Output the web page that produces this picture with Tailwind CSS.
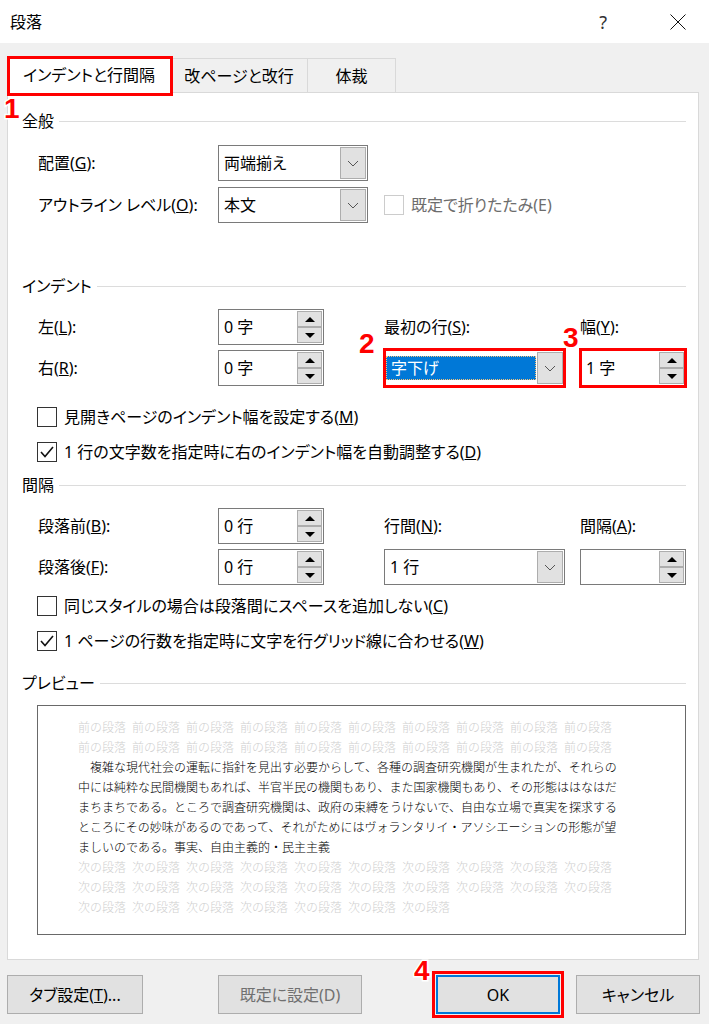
<!DOCTYPE html>
<html lang="ja">
<head>
  <meta charset="UTF-8" />
  <title>段落</title>
  <script src="https://cdn.jsdelivr.net/npm/@tailwindcss/browser@4"></script>
</head>
<body class="bg-[#f0f0f0]">
  <div class="relative w-[709px] h-[1024px] overflow-hidden bg-[#f0f0f0] text-black text-[16px] leading-[24px] font-['Noto_Sans','Noto_Sans_CJK_JP',sans-serif] [font-feature-settings:'palt']">

    <!-- Title bar -->
    <div class="flex items-center justify-between h-[43px] bg-white pl-[10px] pr-[23px]">
      <span>段落</span>
      <div class="flex items-center gap-[63px]">
        <span class="text-[18px] text-[#333]">?</span>
        <svg class="w-[16px] h-[16px]" viewBox="0 0 16 16" fill="none" stroke="#111" stroke-width="1"><path d="M.5.5l15 15M15.5.5l-15 15" /></svg>
      </div>
    </div>

    <!-- Tabs -->
    <div class="relative z-10 flex items-end h-[49px] pl-[7px]">
      <div class="relative flex items-center justify-center w-[164px] h-[37px] -mb-px bg-white border-t border-l border-r border-[#d9d9d9]">
        インデントと行間隔
        <div class="absolute -left-[1px] -top-[1px] w-[166px] h-[40px] border-[3px] border-[#ff0000]"></div>
      </div>
      <div class="flex items-center justify-center w-[137px] h-[34px] border-t border-r border-[#d9d9d9]">改ページと改行</div>
      <div class="flex items-center justify-center w-[88px] h-[34px] border-t border-r border-[#d9d9d9]">体裁</div>
    </div>

    <!-- Panel -->
    <div class="ml-[7px] w-[692px] h-[868px] bg-white border border-[#d9d9d9] pl-[14px] pr-[12px]">

      <div class="flex items-center gap-[5px] h-[24px] mt-[16px]"><span>全般</span><div class="flex-1 h-px bg-[#dcdcdc]"></div></div>

      <div class="flex items-center h-[36px] mt-[12px] ml-[16px]">
        <span class="w-[180px]">配置(<u>G</u>):</span>
        <div class="flex items-center justify-between w-[150px] h-[36px] border border-[#7a7a7a] pl-[5px] pr-px">
          <span>両端揃え</span>
          <div class="flex items-center justify-center w-[26px] h-[32px] bg-[#e1e1e1] border border-[#adadad]">
            <svg class="w-[12px] h-[7px]" viewBox="0 0 12 7" fill="none" stroke="#555"><path d="M1 1l5 5 5-5" /></svg>
          </div>
        </div>
      </div>

      <div class="flex items-center h-[36px] mt-[6px] ml-[16px]">
        <span class="w-[180px]">アウトライン レベル(<u>O</u>):</span>
        <div class="flex items-center justify-between w-[150px] h-[36px] border border-[#7a7a7a] pl-[5px] pr-px">
          <span>本文</span>
          <div class="flex items-center justify-center w-[26px] h-[32px] bg-[#e1e1e1] border border-[#adadad]">
            <svg class="w-[12px] h-[7px]" viewBox="0 0 12 7" fill="none" stroke="#555"><path d="M1 1l5 5 5-5" /></svg>
          </div>
        </div>
        <div class="w-[20px] h-[20px] ml-[16px] border border-[#cccccc]"></div>
        <span class="ml-[7px] text-[#6d6d6d]">既定で折りたたみ(E)</span>
      </div>

      <div class="flex items-center gap-[5px] h-[24px] mt-[51px]"><span>インデント</span><div class="flex-1 h-px bg-[#dcdcdc]"></div></div>

      <div class="grid grid-cols-[180px_106px_60px_196px_106px] grid-rows-[36px_36px] gap-y-[5px] mt-[11px] ml-[16px] items-center">
        <span>左(<u>L</u>):</span>
        <div class="flex items-center justify-between h-[36px] border border-[#7a7a7a] pl-[5px] pr-px">
          <span>0 字</span>
          <div class="flex flex-col w-[25px]">
            <div class="flex items-center justify-center h-[16px] bg-[#e1e1e1] border border-[#adadad]"><svg class="w-[10px] h-[5px]" viewBox="0 0 10 5"><path d="M0 5h10L5 0z" /></svg></div>
            <div class="flex items-center justify-center h-[16px] bg-[#e1e1e1] border border-[#adadad]"><svg class="w-[10px] h-[5px]" viewBox="0 0 10 5"><path d="M0 0h10L5 5z" /></svg></div>
          </div>
        </div>
        <span></span>
        <span>最初の行(<u>S</u>):</span>
        <span>幅(<u>Y</u>):</span>

        <span>右(<u>R</u>):</span>
        <div class="flex items-center justify-between h-[36px] border border-[#7a7a7a] pl-[5px] pr-px">
          <span>0 字</span>
          <div class="flex flex-col w-[25px]">
            <div class="flex items-center justify-center h-[16px] bg-[#e1e1e1] border border-[#adadad]"><svg class="w-[10px] h-[5px]" viewBox="0 0 10 5"><path d="M0 5h10L5 0z" /></svg></div>
            <div class="flex items-center justify-center h-[16px] bg-[#e1e1e1] border border-[#adadad]"><svg class="w-[10px] h-[5px]" viewBox="0 0 10 5"><path d="M0 0h10L5 5z" /></svg></div>
          </div>
        </div>
        <span></span>
        <div class="relative flex items-center justify-between w-[181px] h-[36px] border border-[#7a7a7a] pl-[1px] pr-px">
          <span class="flex-1 h-[24px] flex items-center mr-px pl-[4px] bg-[#0078d7] text-white border border-dotted border-[#f5c27a]">字下げ</span>
          <div class="flex items-center justify-center w-[26px] h-[32px] bg-[#e1e1e1] border border-[#adadad]">
            <svg class="w-[12px] h-[7px]" viewBox="0 0 12 7" fill="none" stroke="#555"><path d="M1 1l5 5 5-5" /></svg>
          </div>
          <div class="absolute -left-[2px] -top-[3px] w-[183px] h-[40px] border-[3px] border-[#ff0000]"></div>
        </div>
        <div class="relative flex items-center justify-between h-[36px] border border-[#7a7a7a] pl-[5px] pr-px">
          <span>1 字</span>
          <div class="flex flex-col w-[25px]">
            <div class="flex items-center justify-center h-[16px] bg-[#e1e1e1] border border-[#adadad]"><svg class="w-[10px] h-[5px]" viewBox="0 0 10 5"><path d="M0 5h10L5 0z" /></svg></div>
            <div class="flex items-center justify-center h-[16px] bg-[#e1e1e1] border border-[#adadad]"><svg class="w-[10px] h-[5px]" viewBox="0 0 10 5"><path d="M0 0h10L5 5z" /></svg></div>
          </div>
          <div class="absolute -left-[2px] -top-[3px] w-[108px] h-[40px] border-[3px] border-[#ff0000]"></div>
        </div>
      </div>

      <div class="flex items-center h-[20px] mt-[21px] ml-[15px]">
        <div class="w-[20px] h-[20px] border border-[#333] bg-white"></div>
        <span class="ml-[7px]">見開きページのインデント幅を設定する(<u>M</u>)</span>
      </div>
      <div class="flex items-center h-[20px] mt-[15px] ml-[15px]">
        <div class="flex items-center justify-center w-[20px] h-[20px] border border-[#333] bg-white">
          <svg class="w-[14px] h-[12px]" viewBox="0 0 14 12" fill="none" stroke="#111" stroke-width="1.6"><path d="M1 6l4 4.5L13 1" /></svg>
        </div>
        <span class="ml-[7px]">1 行の文字数を指定時に右のインデント幅を自動調整する(<u>D</u>)</span>
      </div>

      <div class="flex items-center gap-[5px] h-[24px] mt-[11px]"><span>間隔</span><div class="flex-1 h-px bg-[#dcdcdc]"></div></div>

      <div class="grid grid-cols-[180px_106px_60px_196px_106px] grid-rows-[36px_36px] gap-y-[5px] mt-[11px] ml-[16px] items-center">
        <span>段落前(<u>B</u>):</span>
        <div class="flex items-center justify-between h-[36px] border border-[#7a7a7a] pl-[5px] pr-px">
          <span>0 行</span>
          <div class="flex flex-col w-[25px]">
            <div class="flex items-center justify-center h-[16px] bg-[#e1e1e1] border border-[#adadad]"><svg class="w-[10px] h-[5px]" viewBox="0 0 10 5"><path d="M0 5h10L5 0z" /></svg></div>
            <div class="flex items-center justify-center h-[16px] bg-[#e1e1e1] border border-[#adadad]"><svg class="w-[10px] h-[5px]" viewBox="0 0 10 5"><path d="M0 0h10L5 5z" /></svg></div>
          </div>
        </div>
        <span></span>
        <span>行間(<u>N</u>):</span>
        <span>間隔(<u>A</u>):</span>

        <span>段落後(<u>F</u>):</span>
        <div class="flex items-center justify-between h-[36px] border border-[#7a7a7a] pl-[5px] pr-px">
          <span>0 行</span>
          <div class="flex flex-col w-[25px]">
            <div class="flex items-center justify-center h-[16px] bg-[#e1e1e1] border border-[#adadad]"><svg class="w-[10px] h-[5px]" viewBox="0 0 10 5"><path d="M0 5h10L5 0z" /></svg></div>
            <div class="flex items-center justify-center h-[16px] bg-[#e1e1e1] border border-[#adadad]"><svg class="w-[10px] h-[5px]" viewBox="0 0 10 5"><path d="M0 0h10L5 5z" /></svg></div>
          </div>
        </div>
        <span></span>
        <div class="flex items-center justify-between w-[181px] h-[36px] border border-[#7a7a7a] pl-[5px] pr-px">
          <span>1 行</span>
          <div class="flex items-center justify-center w-[26px] h-[32px] bg-[#e1e1e1] border border-[#adadad]">
            <svg class="w-[12px] h-[7px]" viewBox="0 0 12 7" fill="none" stroke="#555"><path d="M1 1l5 5 5-5" /></svg>
          </div>
        </div>
        <div class="flex items-center justify-end h-[36px] border border-[#7a7a7a] pl-[5px] pr-px">
          <div class="flex flex-col w-[25px]">
            <div class="flex items-center justify-center h-[16px] bg-[#e1e1e1] border border-[#adadad]"><svg class="w-[10px] h-[5px]" viewBox="0 0 10 5"><path d="M0 5h10L5 0z" /></svg></div>
            <div class="flex items-center justify-center h-[16px] bg-[#e1e1e1] border border-[#adadad]"><svg class="w-[10px] h-[5px]" viewBox="0 0 10 5"><path d="M0 0h10L5 5z" /></svg></div>
          </div>
        </div>
      </div>

      <div class="flex items-center h-[20px] mt-[11px] ml-[15px]">
        <div class="w-[20px] h-[20px] border border-[#333] bg-white"></div>
        <span class="ml-[7px]">同じスタイルの場合は段落間にスペースを追加しない(<u>C</u>)</span>
      </div>
      <div class="flex items-center h-[20px] mt-[15px] ml-[15px]">
        <div class="flex items-center justify-center w-[20px] h-[20px] border border-[#333] bg-white">
          <svg class="w-[14px] h-[12px]" viewBox="0 0 14 12" fill="none" stroke="#111" stroke-width="1.6"><path d="M1 6l4 4.5L13 1" /></svg>
        </div>
        <span class="ml-[7px]">1 ページの行数を指定時に文字を行グリッド線に合わせる(<u>W</u>)</span>
      </div>

      <div class="flex items-center gap-[5px] h-[24px] mt-[20px]"><span>プレビュー</span><div class="flex-1 h-px bg-[#dcdcdc]"></div></div>

      <!-- Preview box -->
      <div class="w-[649px] h-[230px] mt-[10px] ml-[15px] border border-[#696969] pt-[12px] pl-[40px] text-[12px] leading-[20px] font-light whitespace-nowrap [font-feature-settings:normal]">
        <div class="text-[#cfcfcf]">前の段落&ensp;前の段落&ensp;前の段落&ensp;前の段落&ensp;前の段落&ensp;前の段落&ensp;前の段落&ensp;前の段落&ensp;前の段落&ensp;前の段落</div>
        <div class="text-[#cfcfcf]">前の段落&ensp;前の段落&ensp;前の段落&ensp;前の段落&ensp;前の段落&ensp;前の段落&ensp;前の段落&ensp;前の段落&ensp;前の段落&ensp;前の段落</div>
        <div class="pl-[12px]">複雑な現代社会の運転に指針を見出す必要からして、各種の調査研究機関が生まれたが、それらの</div>
        <div>中には純粋な民間機関もあれば、半官半民の機関もあり、また国家機関もあり、その形態ははなはだ</div>
        <div>まちまちである。ところで調査研究機関は、政府の束縛をうけないで、自由な立場で真実を探求する</div>
        <div>ところにその妙味があるのであって、それがためにはヴォランタリイ・アソシエーションの形態が望</div>
        <div>ましいのである。事実、自由主義的・民主主義</div>
        <div class="text-[#cfcfcf]">次の段落&ensp;次の段落&ensp;次の段落&ensp;次の段落&ensp;次の段落&ensp;次の段落&ensp;次の段落&ensp;次の段落&ensp;次の段落&ensp;次の段落</div>
        <div class="text-[#cfcfcf]">次の段落&ensp;次の段落&ensp;次の段落&ensp;次の段落&ensp;次の段落&ensp;次の段落&ensp;次の段落&ensp;次の段落&ensp;次の段落&ensp;次の段落</div>
        <div class="text-[#cfcfcf]">次の段落&ensp;次の段落&ensp;次の段落&ensp;次の段落&ensp;次の段落&ensp;次の段落&ensp;次の段落</div>
      </div>
    </div>

    <!-- Footer buttons -->
    <div class="flex items-center h-[39px] mt-[15px] ml-[7px]">
      <div class="flex items-center justify-center w-[136px] h-[39px] bg-[#e1e1e1] border border-[#adadad]"><span>タブ設定(<u>T</u>)...</span></div>
      <div class="flex items-center justify-center w-[144px] h-[39px] ml-[75px] bg-[#e1e1e1] border border-[#adadad] text-[#707070]">既定に設定(D)</div>
      <div class="relative flex items-center justify-center w-[124px] h-[39px] ml-[74px] bg-[#e1e1e1] border-2 border-[#0078d7]">
        OK
        <div class="absolute -left-[6px] -top-[6px] w-[132px] h-[47px] border-[3px] border-[#ff0000]"></div>
      </div>
      <div class="flex items-center justify-center w-[124px] h-[39px] ml-[16px] bg-[#e1e1e1] border border-[#adadad]">キャンセル</div>
    </div>

    <!-- Step numbers -->
    <span class="absolute left-[4px] top-[95px] text-[28px] leading-[28px] font-bold text-[#ff0000] font-['Liberation_Sans',sans-serif] [-webkit-text-stroke:3px_white] [paint-order:stroke]">1</span>
    <span class="absolute left-[359px] top-[330px] text-[28px] leading-[28px] font-bold text-[#ff0000] font-['Liberation_Sans',sans-serif] [-webkit-text-stroke:3px_white] [paint-order:stroke]">2</span>
    <span class="absolute left-[563px] top-[324px] text-[28px] leading-[28px] font-bold text-[#ff0000] font-['Liberation_Sans',sans-serif] [-webkit-text-stroke:3px_white] [paint-order:stroke]">3</span>
    <span class="absolute left-[414px] top-[957px] text-[28px] leading-[28px] font-bold text-[#ff0000] font-['Liberation_Sans',sans-serif] [-webkit-text-stroke:3px_white] [paint-order:stroke]">4</span>
  </div>
</body>
</html>
